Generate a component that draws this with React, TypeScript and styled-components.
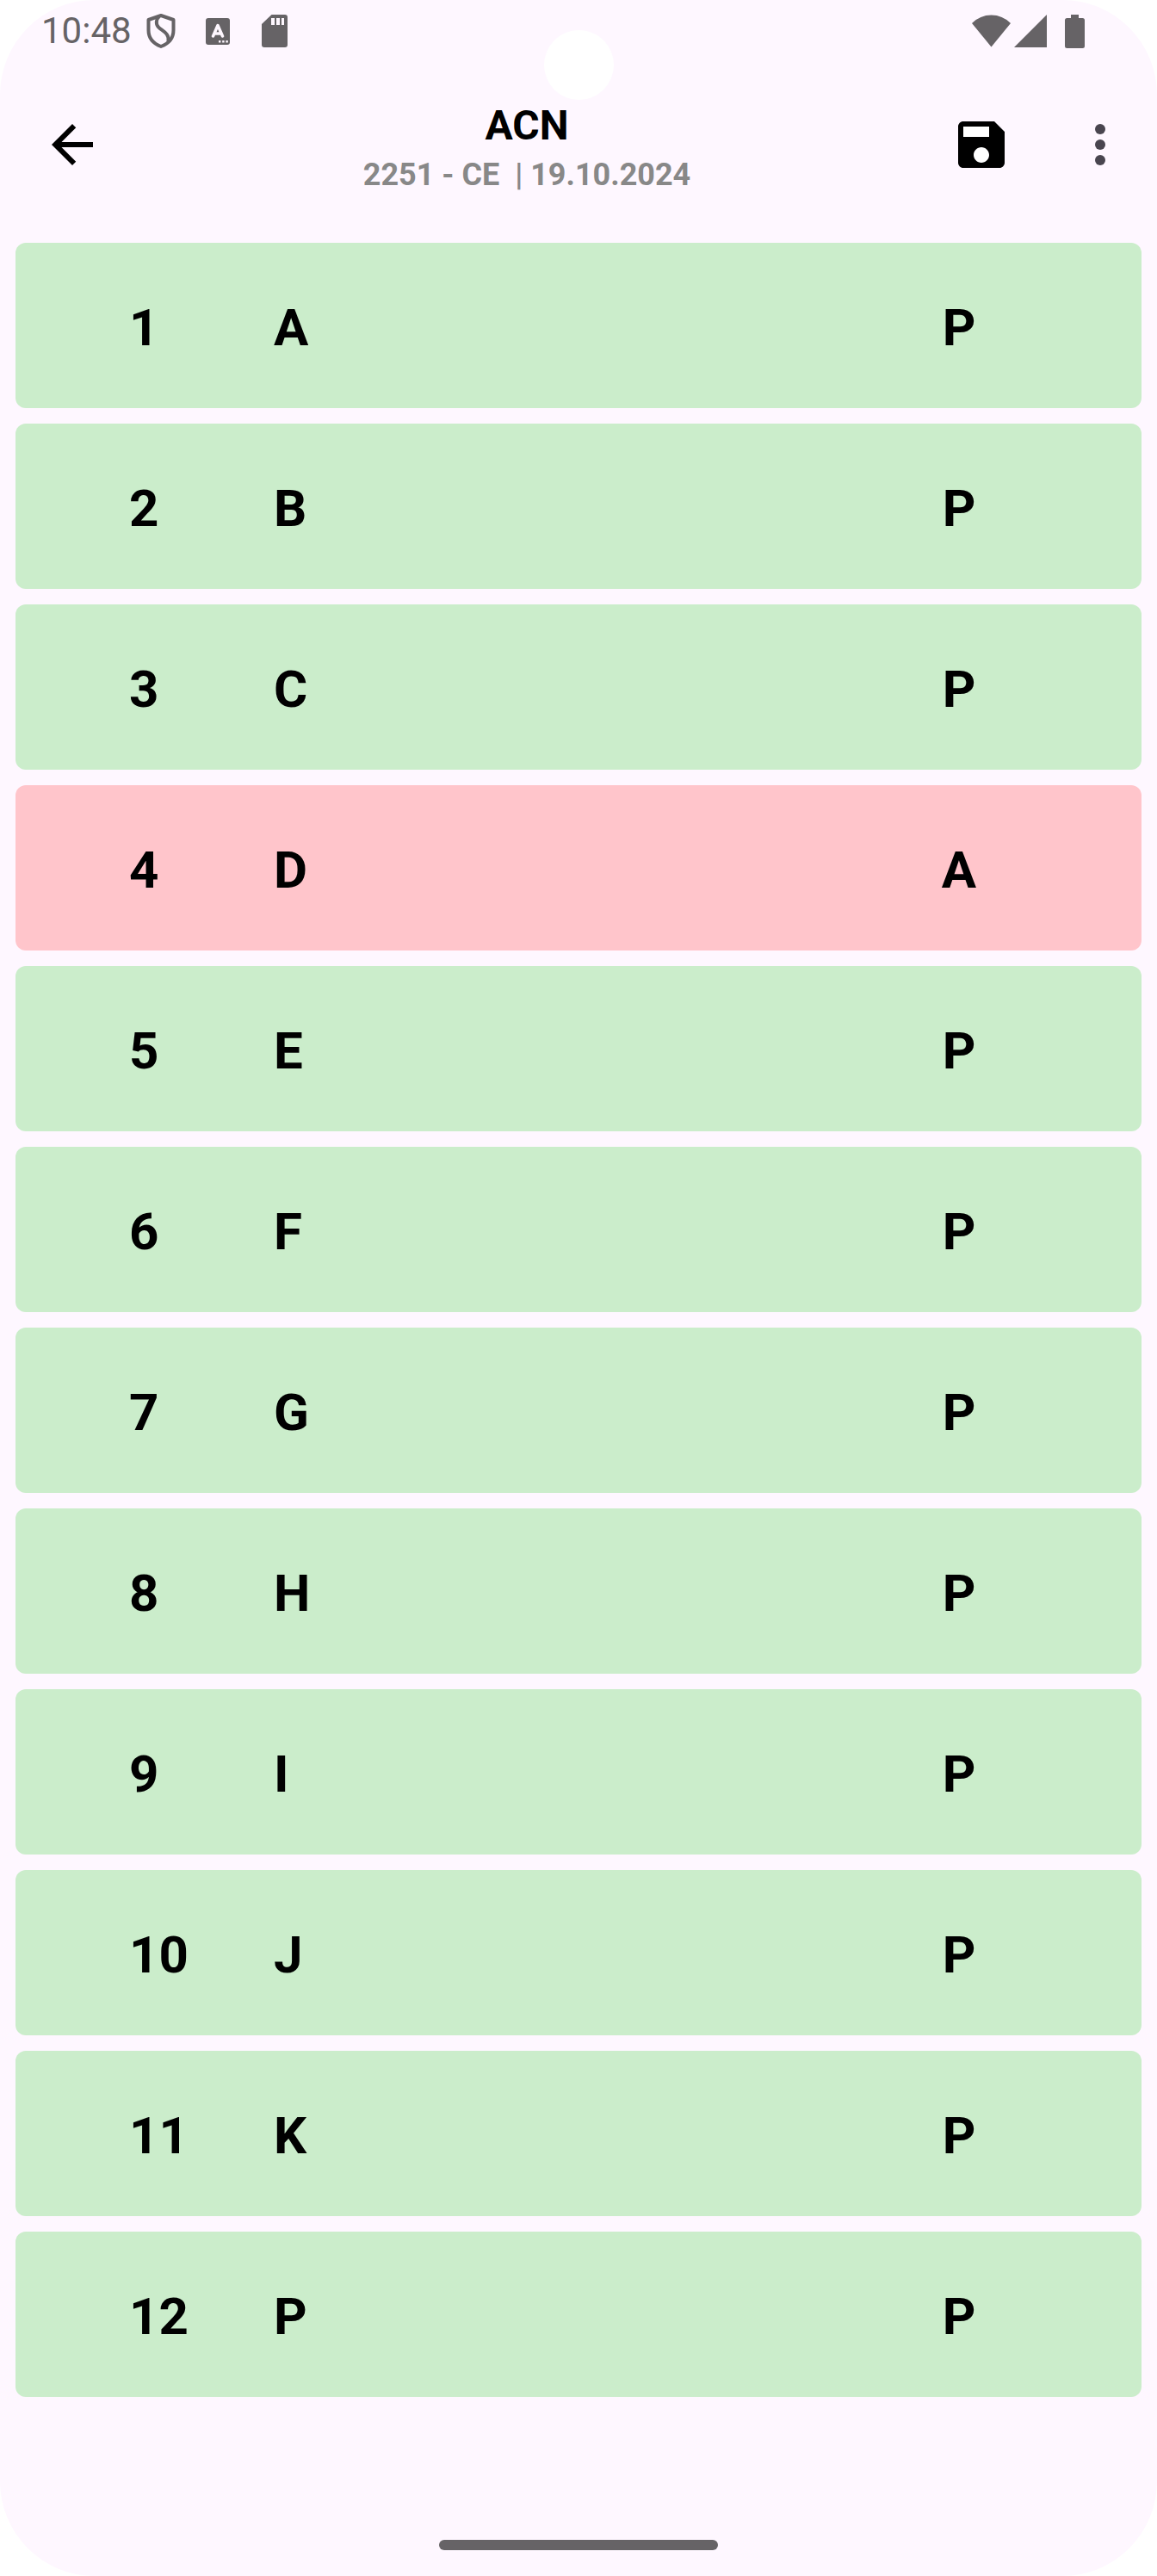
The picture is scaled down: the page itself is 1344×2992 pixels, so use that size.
import React, { useState } from "react";
import styled, { createGlobalStyle } from "styled-components";

type Status = "P" | "A";

interface Student {
  roll: number;
  name: string;
  status: Status;
}

const initialStudents: Student[] = [
  { roll: 1, name: "A", status: "P" },
  { roll: 2, name: "B", status: "P" },
  { roll: 3, name: "C", status: "P" },
  { roll: 4, name: "D", status: "A" },
  { roll: 5, name: "E", status: "P" },
  { roll: 6, name: "F", status: "P" },
  { roll: 7, name: "G", status: "P" },
  { roll: 8, name: "H", status: "P" },
  { roll: 9, name: "I", status: "P" },
  { roll: 10, name: "J", status: "P" },
  { roll: 11, name: "K", status: "P" },
  { roll: 12, name: "P", status: "P" },
];

const GlobalStyle = createGlobalStyle`
  *, *::before, *::after { box-sizing: border-box; }
  body {
    margin: 0;
    background: #ffffff;
    color: #000000;
    font-family: Roboto, "Liberation Sans", sans-serif;
  }
`;

const Screen = styled.div`
  position: relative;
  display: flex;
  flex-direction: column;
  min-height: 100vh;
  background: #fef7ff;
  border-radius: 110px;
`;

const CameraCutout = styled.span`
  position: absolute;
  top: 35px;
  left: 50%;
  width: 81px;
  height: 81px;
  margin-left: -40px;
  border-radius: 50%;
  background: #ffffff;
`;

const StatusBar = styled.div`
  display: flex;
  justify-content: space-between;
  align-items: center;
  height: 72px;
  padding: 0 84px 0 48px;
  color: #666366;
`;

const StatusGroup = styled.div<{ $gap: number }>`
  display: flex;
  align-items: center;
  gap: ${(p) => p.$gap}px;

  svg {
    display: block;
  }
`;

const Clock = styled.time`
  font-size: 42px;
  line-height: 48px;
`;

const TopBar = styled.header`
  display: flex;
  align-items: center;
  height: 192px;
  padding-left: 12px;
`;

const IconButton = styled.button<{ $width?: number; $color?: string }>`
  display: flex;
  align-items: center;
  justify-content: center;
  flex: none;
  width: ${(p) => p.$width ?? 144}px;
  height: 144px;
  padding: 0;
  border: 0;
  border-radius: 72px;
  background: transparent;
  color: ${(p) => p.$color ?? "#000000"};
  cursor: pointer;
`;

const Heading = styled.div`
  flex: 1;
  display: flex;
  flex-direction: column;
  align-items: center;
  min-width: 0;
  padding-top: 10px;
`;

const Title = styled.h1`
  margin: 0;
  font-size: 48px;
  line-height: 60px;
  font-weight: 700;
`;

const Subtitle = styled.p`
  margin: 0;
  font-size: 36px;
  line-height: 54px;
  font-weight: 700;
  color: #888888;
  white-space: pre;
`;

const List = styled.ul`
  flex: 1;
  display: flex;
  flex-direction: column;
  gap: 18px;
  margin: 0;
  padding: 18px;
  list-style: none;
`;

const Row = styled.button<{ $absent: boolean }>`
  display: grid;
  grid-template-columns: 168px 1fr 160px;
  align-items: center;
  width: 100%;
  height: 192px;
  padding: 6px 132px 0;
  border: 0;
  border-radius: 12px;
  background: ${(p) => (p.$absent ? "#ffc5cb" : "#cbedcb")};
  color: #000000;
  font-family: inherit;
  font-size: 60px;
  line-height: 72px;
  font-weight: 700;
  text-align: left;
  cursor: pointer;
`;

const Mark = styled.span`
  text-align: center;
`;

const NavigationBar = styled.div`
  display: flex;
  justify-content: center;
  padding: 12px 0 30px;
`;

const HomeHandle = styled.span`
  width: 324px;
  height: 12px;
  border-radius: 6px;
  background: #666366;
`;

const ShieldIcon = () => (
  <svg width="48" height="48" viewBox="0 0 48 48" fill="none" stroke="currentColor" strokeWidth="4" strokeLinejoin="round" aria-hidden="true">
    <path d="M24 6 L38.500 11 V23 C38.500 32 33 38.500 24 42 C15 38.500 9.500 32 9.500 23 V11 Z" />
    <path d="M22 7 C18.500 10 17.500 16 21 19.500 C25 24 34 26 32.500 36" />
  </svg>
);

const LetterBoxIcon = () => (
  <svg width="48" height="48" viewBox="0 0 48 48" fill="currentColor" aria-hidden="true">
    <rect x="10" y="9" width="28" height="31" rx="3" />
    <path d="M18.500 30 L24 17.500 L29.500 30 M20.500 27 H27.500" fill="none" stroke="#fef7ff" strokeWidth="3.500" strokeLinecap="round" strokeLinejoin="round" />
    <path d="M25 35h2.400v2.400h-2.400zM29.200 35h2.400v2.400h-2.400zM33.400 35h2.400v2.400h-2.400z" fill="#fef7ff" />
  </svg>
);

const SdCardIcon = () => (
  <svg width="48" height="48" viewBox="0 0 48 48" fill="currentColor" aria-hidden="true">
    <path d="M20.500 5 H36 A3 3 0 0 1 39 8 V40 A3 3 0 0 1 36 43 H12 A3 3 0 0 1 9 40 V16 Z" />
    <path d="M20 9h4v8h-4zM26 9h4v8h-4zM32 9h3v8h-3z" fill="#fef7ff" />
  </svg>
);

const WifiIcon = () => (
  <svg width="45" height="38" viewBox="0 0 45 38" fill="currentColor" aria-hidden="true">
    <path d="M22.500 37.500 L0 10 Q9.500 0.500 22.500 0.500 T45 10 Z" />
  </svg>
);

const SignalIcon = () => (
  <svg width="38" height="38" viewBox="0 0 38 38" fill="currentColor" aria-hidden="true">
    <path d="M0 38 L38 0 V38 Z" />
  </svg>
);

const BatteryIcon = () => (
  <svg width="23" height="39" viewBox="0 0 23 39" fill="currentColor" aria-hidden="true">
    <path d="M7 0 H16 V4 H20.500 A2.500 2.500 0 0 1 23 6.500 V36.500 A2.500 2.500 0 0 1 20.500 39 H2.500 A2.500 2.500 0 0 1 0 36.500 V6.500 A2.500 2.500 0 0 1 2.500 4 H7 Z" />
  </svg>
);

const BackIcon = () => (
  <svg width="72" height="72" viewBox="0 0 24 24" fill="currentColor" aria-hidden="true">
    <path d="M20 11H7.830l5.590-5.590L12 4l-8 8 8 8 1.410-1.410L7.830 13H20v-2z" />
  </svg>
);

const SaveIcon = () => (
  <svg width="72" height="72" viewBox="0 0 24 24" fill="currentColor" aria-hidden="true">
    <path d="M5 5H15V9H5zM9 16a3 3 0 1 0 6 0a3 3 0 1 0-6 0z" fill="#ffffff" />
    <path d="M17 3H5c-1.110 0-2 .9-2 2v14c0 1.100.89 2 2 2h14c1.100 0 2-.9 2-2V7l-4-4zm-5 16c-1.660 0-3-1.340-3-3s1.340-3 3-3 3 1.340 3 3-1.340 3-3 3zm3-10H5V5h10v4z" />
  </svg>
);

const MoreIcon = () => (
  <svg width="72" height="72" viewBox="0 0 24 24" fill="currentColor" aria-hidden="true">
    <circle cx="12" cy="6" r="2" />
    <circle cx="12" cy="12" r="2" />
    <circle cx="12" cy="18" r="2" />
  </svg>
);

export default function App() {
  const [students, setStudents] = useState(initialStudents);

  const toggle = (roll: number) =>
    setStudents((list) =>
      list.map((s) => (s.roll === roll ? { ...s, status: s.status === "P" ? "A" : "P" } : s))
    );

  return (
    <>
      <GlobalStyle />
      <Screen>
        <StatusBar>
          <StatusGroup $gap={10}>
            <Clock>10:48</Clock>
            <StatusGroup $gap={18}>
              <ShieldIcon />
              <LetterBoxIcon />
              <SdCardIcon />
            </StatusGroup>
          </StatusGroup>
          <StatusGroup $gap={21}>
            <StatusGroup $gap={4}>
              <WifiIcon />
              <SignalIcon />
            </StatusGroup>
            <BatteryIcon />
          </StatusGroup>
        </StatusBar>
        <CameraCutout />
        <TopBar>
          <IconButton type="button" aria-label="Back">
            <BackIcon />
          </IconButton>
          <Heading>
            <Title>ACN</Title>
            <Subtitle>{"2251 - CE  | 19.10.2024"}</Subtitle>
          </Heading>
          <IconButton type="button" aria-label="Save">
            <SaveIcon />
          </IconButton>
          <IconButton type="button" aria-label="More options" $width={132} $color="#49454f">
            <MoreIcon />
          </IconButton>
        </TopBar>
        <List>
          {students.map((s) => (
            <li key={s.roll}>
              <Row type="button" $absent={s.status === "A"} onClick={() => toggle(s.roll)}>
                <span>{s.roll}</span>
                <span>{s.name}</span>
                <Mark>{s.status}</Mark>
              </Row>
            </li>
          ))}
        </List>
        <NavigationBar>
          <HomeHandle />
        </NavigationBar>
      </Screen>
    </>
  );
}
